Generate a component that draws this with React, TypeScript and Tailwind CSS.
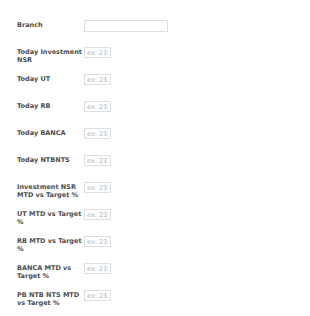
import React from 'react';

const rows: { label: string; wide?: boolean }[] = [
  { label: 'Branch', wide: true },
  { label: 'Today Investment NSR' },
  { label: 'Today UT' },
  { label: 'Today RB' },
  { label: 'Today BANCA' },
  { label: 'Today NTBNTS' },
  { label: 'Investment NSR MTD vs Target %' },
  { label: 'UT MTD vs Target %' },
  { label: 'RB MTD vs Target %' },
  { label: 'BANCA MTD vs Target %' },
  { label: 'PB NTB NTS MTD vs Target %' },
];

export default function App() {
  return (
    <div
      className="w-[310px] h-[316px] bg-white pt-[20px] pl-[17px]"
      style={{ fontFamily: '"DejaVu Sans", Verdana, sans-serif' }}
    >
      {rows.map((r) => (
        <div key={r.label} className="flex items-start h-[27px]">
          <div className="w-[67px] pt-[2px] text-[6.5px] leading-[7.5px] font-bold text-[#4d4d4d]">
            {r.label}
          </div>
          {r.wide ? (
            <input
              className="w-[84px] h-[12px] border border-[#dedede] bg-white outline-none"
              type="text"
            />
          ) : (
            <input
              className="w-[27px] h-[11px] border border-[#dedede] bg-white px-[2px] text-[6.5px] leading-[9px] text-[#999] placeholder:text-[#b0b0b0] outline-none"
              type="text"
              placeholder="ex: 23"
            />
          )}
        </div>
      ))}
    </div>
  );
}
